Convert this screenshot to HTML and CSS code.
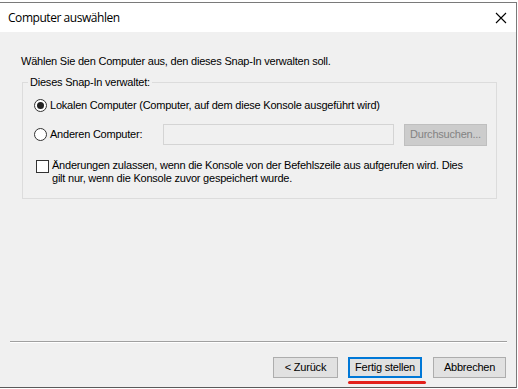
FILE: index.html
```html
<!DOCTYPE html>
<html lang="de">
<head>
<meta charset="utf-8">
<title>Computer auswählen</title>
<link rel="stylesheet" href="styles.css">
</head>
<body>
<div class="window">
  <div class="titlebar">
    <span class="title">Computer auswählen</span>
    <svg class="close" width="12" height="12" viewBox="0 0 12 12"><path d="M1 1 L11 11 M11 1 L1 11" stroke="#000" stroke-width="1.1" fill="none"/></svg>
  </div>
  <div class="body">
    <div class="content">
      <p class="intro">Wählen Sie den Computer aus, den dieses Snap-In verwalten soll.</p>
      <fieldset class="group">
        <legend class="legend">Dieses Snap-In verwaltet:</legend>
        <div class="row row-local">
          <span class="radio checked"></span>
          <span class="label">Lokalen Computer (Computer, auf dem diese Konsole ausgeführt wird)</span>
        </div>
        <div class="row row-other">
          <span class="opt">
            <span class="radio"></span>
            <span class="label">Anderen Computer:</span>
          </span>
          <span class="textbox"></span>
          <span class="btn btn-disabled">Durchsuchen...</span>
        </div>
        <div class="row row-check">
          <span class="checkbox"></span>
          <span class="label check-text">Änderungen zulassen, wenn die Konsole von der Befehlszeile aus aufgerufen wird. Dies<br>gilt nur, wenn die Konsole zuvor gespeichert wurde.</span>
        </div>
      </fieldset>
    </div>
    <div class="footer">
      <div class="separator"></div>
      <div class="buttons">
        <span class="btn btn-back">&lt; Zurück</span>
        <span class="btn btn-default">Fertig stellen<span class="mark"></span></span>
        <span class="btn btn-cancel">Abbrechen</span>
      </div>
    </div>
  </div>
</div>
</body>
</html>
```

FILE: styles.css
```css
html, body {
  margin: 0;
  padding: 0;
  background: #ffffff;
}
body {
  width: 518px;
  height: 389px;
  overflow: hidden;
  font-family: "Liberation Sans", Arial, sans-serif;
  font-size: 11px;
  letter-spacing: -0.22px;
  color: #000;
}
.window {
  margin-top: 2px;
  width: 516px;
  height: 384px;
  border-top: 1px solid #7a7a7a;
  border-right: 1px solid #7a7a7a;
  border-bottom: 1px solid #5a5a5a;
  display: flex;
  flex-direction: column;
}
.titlebar {
  height: 29px;
  background: #ffffff;
  display: flex;
  align-items: center;
  justify-content: space-between;
  padding: 0 9px 0 8px;
}
.title {
  font-family: "Open Sans", "Noto Sans", sans-serif;
  font-size: 12px;
  line-height: 16px;
  letter-spacing: -0.45px;
}
.close {
  display: block;
}
.body {
  flex: 1;
  background: #f0f0f0;
  display: flex;
  flex-direction: column;
}
.content {
  flex: 1;
  padding: 23px 0 0 21px;
}
.intro {
  margin: 0;
  line-height: 13px;
}
.group {
  margin: 8px 0 0 1px;
  padding: 0 0 13px 0;
  width: 475px;
  box-sizing: border-box;
  border: 1px solid #dcdcdc;
  min-width: 0;
}
.legend {
  margin-left: 5px;
  padding: 0 2px;
  line-height: 13px;
}
.row {
  display: flex;
  align-items: center;
  padding-left: 11px;
}
.label {
  line-height: 13px;
}
.row-local {
  margin-top: 6px;
  height: 20px;
}
.row-other {
  margin-top: 9px;
  height: 21px;
}
.row-check {
  margin-top: 14px;
  align-items: flex-start;
  padding-left: 13px;
}
.opt {
  display: flex;
  align-items: center;
  width: 129px;
}
.radio {
  width: 13px;
  height: 13px;
  box-sizing: border-box;
  border: 1px solid #333333;
  border-radius: 50%;
  background: #ffffff;
  margin-right: 3px;
  display: flex;
  align-items: center;
  justify-content: center;
  flex: none;
}
.radio.checked::after {
  content: "";
  width: 7px;
  height: 7px;
  border-radius: 50%;
  background: #222222;
}
.checkbox {
  width: 13px;
  height: 13px;
  box-sizing: border-box;
  border: 1px solid #333333;
  background: #ffffff;
  margin-right: 3px;
  margin-top: 1px;
  flex: none;
}
.textbox {
  width: 231px;
  height: 21px;
  box-sizing: border-box;
  border: 1px solid #d4d4d4;
  background: #f0f0f0;
}
.btn {
  display: flex;
  align-items: center;
  justify-content: center;
  box-sizing: border-box;
  height: 21px;
  border: 1px solid #adadad;
  background: #e1e1e1;
  line-height: 13px;
  position: relative;
}
.btn-disabled {
  margin-left: 10px;
  width: 83px;
  height: 22px;
  border-color: #bfbfbf;
  background: #cccccc;
  color: #838383;
}
.footer {
  height: 46px;
}
.separator {
  margin-left: 10px;
  width: 497px;
  height: 0;
  border-top: 1px solid #a0a0a0;
  border-bottom: 1px solid #ffffff;
}
.buttons {
  margin-top: 14px;
  display: flex;
  justify-content: flex-end;
  padding-right: 10px;
}
.btn-back {
  width: 65px;
}
.btn-default {
  width: 74px;
  margin-left: 10px;
  border: 2px solid #0078d7;
}
.btn-cancel {
  width: 73px;
  margin-left: 11px;
}
.mark {
  position: absolute;
  left: -2px;
  top: 22px;
  width: 78px;
  height: 3px;
  border-radius: 2px;
  background: #e3201b;
}
```
